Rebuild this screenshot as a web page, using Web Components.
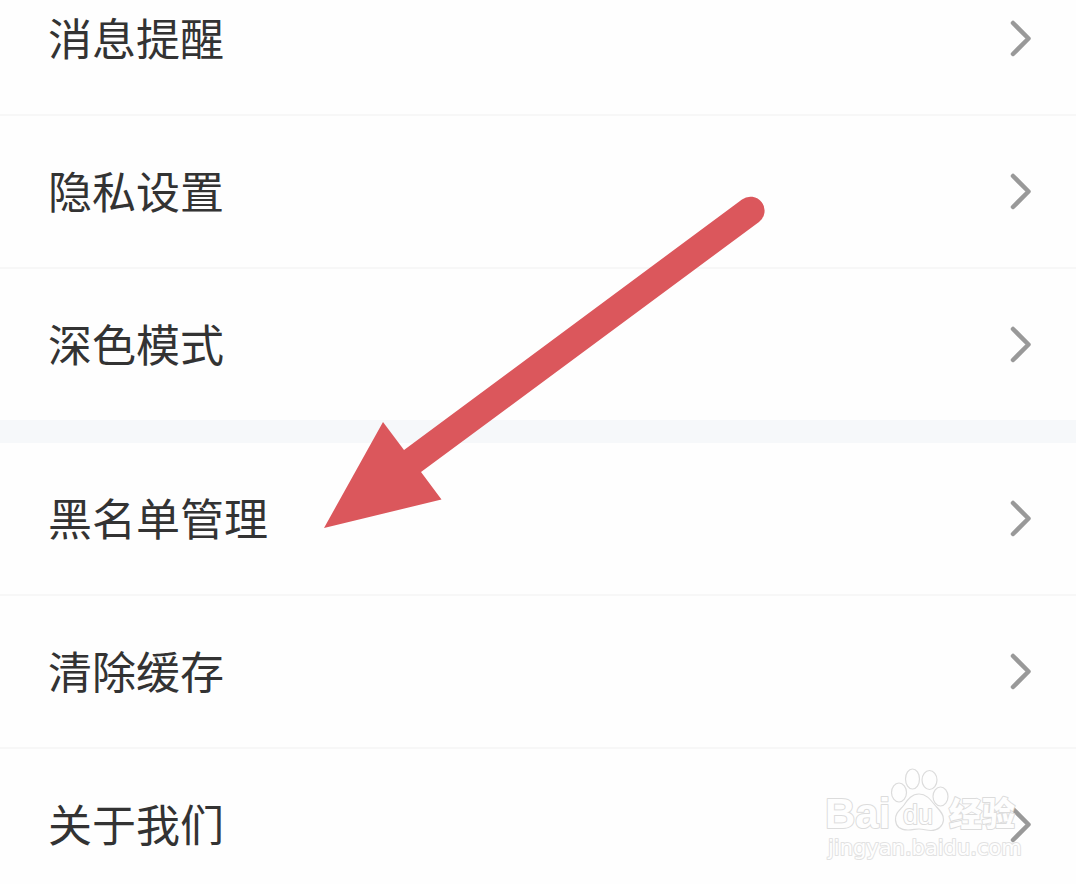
<!DOCTYPE html>
<html lang="zh-CN">
<head>
<meta charset="utf-8">
<meta name="viewport" content="width=device-width, initial-scale=1">
<title>设置</title>
<style>
	body {
		margin: 0;
		background: #fefefe;
		color: #333;
		font-family: "Noto Sans CJK SC", sans-serif;
	}
</style>
</head>
<body>
<settings-screen>
	<settings-group>
		<settings-row>消息提醒</settings-row>
		<settings-row>隐私设置</settings-row>
		<settings-row>深色模式</settings-row>
	</settings-group>
	<settings-group>
		<settings-row>黑名单管理</settings-row>
		<settings-row>清除缓存</settings-row>
		<settings-row>关于我们</settings-row>
	</settings-group>
	<pointer-arrow slot="overlay"></pointer-arrow>
	<site-watermark slot="overlay"></site-watermark>
</settings-screen>

<script>
customElements.define('settings-screen', class extends HTMLElement {
	constructor() {
		super();
		this.attachShadow({ mode: 'open' });
		this.shadowRoot.innerHTML = `
			<style>
			:host {
				display: block;
				position: relative;
				height: 100vh;
				overflow: hidden;
			}

			/* the list is scrolled a little, so the first row is cut */
			main {
				display: flex;
				flex-direction: column;
				gap: 23px;
				margin-top: -37px;
				background: #f6f8fa;
			}
			</style>
			<main><slot></slot></main>
			<slot name="overlay"></slot>
		`;
	}
})

customElements.define('settings-group', class extends HTMLElement {
	constructor() {
		super();
		this.attachShadow({ mode: 'open' });
		this.shadowRoot.innerHTML = `
			<style>
			:host {
				display: block;
				background: #fefefe;
			}

			::slotted(:not(:last-child)) {
				border-bottom: 2px solid #f7f7f7;
			}
			</style>
			<slot></slot>
		`;
	}
})

customElements.define('settings-row', class extends HTMLElement {
	constructor() {
		super();
		this.attachShadow({ mode: 'open' });
		this.shadowRoot.innerHTML = `
			<style>
			:host {
				display: block;
			}

			button {
				display: flex;
				align-items: center;
				justify-content: space-between;
				box-sizing: border-box;
				width: 100%;
				min-height: 151px;
				padding: 0 44px 0 48px;
				border: 0;
				background: none;
				color: inherit;
				font: inherit;
				font-size: 44px;
				line-height: 64px;
				text-align: left;
				cursor: pointer;
			}

			span {
				padding-bottom: 4px;
			}

			svg {
				flex: none;
				fill: none;
				stroke: #999;
				stroke-width: 4.500;
				stroke-linecap: round;
				stroke-linejoin: round;
			}
			</style>
			<button type="button">
				<span><slot></slot></span>
				<svg width="22" height="37" viewBox="0 0 22 37" aria-hidden="true">
					<path d="M3 3 L18.500 18.500 L3 34"/>
				</svg>
			</button>
		`;
	}
})

customElements.define('pointer-arrow', class extends HTMLElement {
	constructor() {
		super();
		this.attachShadow({ mode: 'open' });
		this.shadowRoot.innerHTML = `
			<style>
			:host {
				position: absolute;
				left: 324px;
				top: 196px;
				pointer-events: none;
			}

			svg {
				display: block;
			}
			</style>
			<svg width="442" height="334" viewBox="324 196 442 334" aria-hidden="true">
				<path fill="#db575c" d="M324 528 L383 422 L404 450 L742 199.500 A14 14 0 0 1 759 222 L421 472 L441.500 499.500 Z"/>
			</svg>
		`;
	}
})

customElements.define('site-watermark', class extends HTMLElement {
	constructor() {
		super();
		this.attachShadow({ mode: 'open' });
		this.shadowRoot.innerHTML = `
			<style>
			:host {
				position: absolute;
				right: 52px;
				bottom: 16px;
				pointer-events: none;
			}

			svg {
				display: block;
				overflow: visible;
			}

			g {
				fill: #fefefe;
				stroke: #dcdcdc;
				stroke-width: 1.200;
				stroke-linejoin: round;
			}

			text {
				paint-order: stroke;
				stroke-width: 2;
			}

			.latin {
				font: bold 42px "Liberation Sans", sans-serif;
			}

			.paw {
				font: 27px "Liberation Sans", sans-serif;
			}

			.cjk {
				font: 900 33px "Noto Sans CJK SC", sans-serif;
			}

			.url {
				font: 21px "DejaVu Sans", sans-serif;
				stroke: #e2e2e2;
			}
			</style>
			<svg width="200" height="104" viewBox="824 764 200 104">
				<g>
					<text class="latin" x="825" y="828">Bai</text>
					<ellipse cx="899" cy="792.500" rx="7.500" ry="9.500"/>
					<ellipse cx="912.500" cy="779" rx="7" ry="10"/>
					<ellipse cx="929.500" cy="780" rx="7.500" ry="9.500"/>
					<ellipse cx="940.500" cy="796.500" rx="7.500" ry="9.500"/>
					<path d="M919 794 C912 794 908 799 904 805 C900 810 895 813 895.500 820 C896 828 902 830 908 830 C913 830 915 829 919 829 C924 829 926 830.500 931 830.500 C938 830.500 943 826 943.500 820 C944 813 938 809 934 804 C930 799 926 794 919 794 Z"/>
					<text class="paw" x="903" y="824">du</text>
					<text class="cjk" x="949" y="826">经验</text>
					<text class="url" x="828" y="855">jingyan.baidu.com</text>
				</g>
			</svg>
		`;
	}
})
</script>
</body>
</html>
